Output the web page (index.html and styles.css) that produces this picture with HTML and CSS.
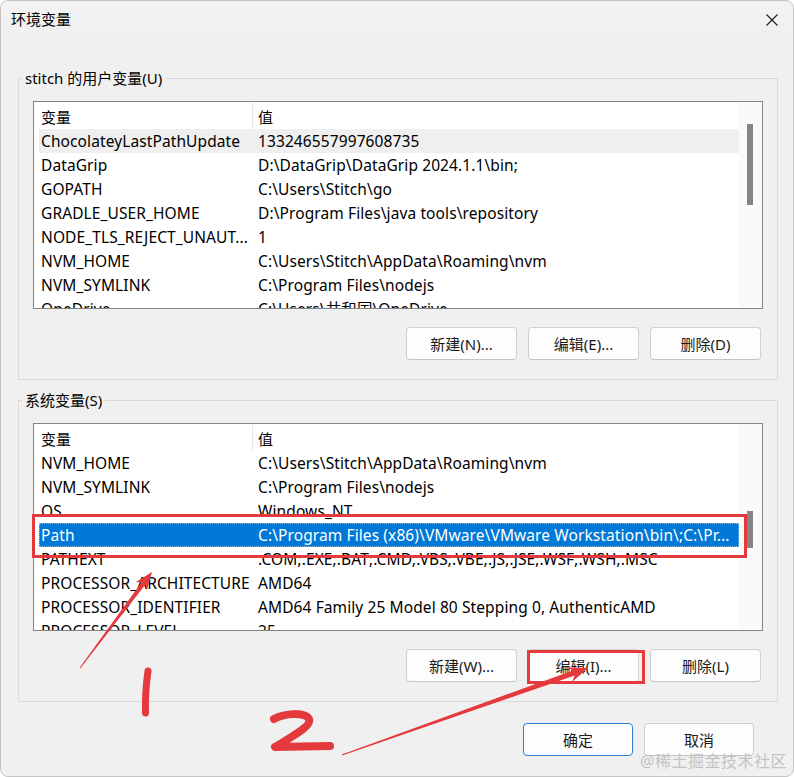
FILE: index.html
```html
<!DOCTYPE html>
<html lang="zh-CN">
<head>
<meta charset="utf-8">
<title>环境变量</title>
<link rel="stylesheet" href="styles.css">
</head>
<body>
<div class="window">
  <div class="titlebar">
    <span class="title">环境变量</span>
    <span class="close">
      <svg width="12" height="12" viewBox="0 0 12 12"><path d="M0.5 0.5 L11.5 11.5 M11.5 0.5 L0.5 11.5" stroke="#1b1b1b" stroke-width="1.1" fill="none"/></svg>
    </span>
  </div>
  <div class="content">
    <fieldset class="group">
      <legend>stitch 的用户变量(U)</legend>
      <div class="list">
        <div class="list-main">
          <div class="list-head"><div class="hcell hname">变量</div><div class="hcell hvalue">值</div></div>
          <div class="row hover"><span class="cell">ChocolateyLastPathUpdate</span><span class="cell">133246557997608735</span></div>
          <div class="row"><span class="cell">DataGrip</span><span class="cell">D:\DataGrip\DataGrip 2024.1.1\bin;</span></div>
          <div class="row"><span class="cell">GOPATH</span><span class="cell">C:\Users\Stitch\go</span></div>
          <div class="row"><span class="cell">GRADLE_USER_HOME</span><span class="cell">D:\Program Files\java tools\repository</span></div>
          <div class="row"><span class="cell">NODE_TLS_REJECT_UNAUT...</span><span class="cell">1</span></div>
          <div class="row"><span class="cell">NVM_HOME</span><span class="cell">C:\Users\Stitch\AppData\Roaming\nvm</span></div>
          <div class="row"><span class="cell">NVM_SYMLINK</span><span class="cell">C:\Program Files\nodejs</span></div>
          <div class="row"><span class="cell">OneDrive</span><span class="cell">C:\Users\共和国\OneDrive</span></div>
        </div>
        <div class="scrollbar"><div class="thumb thumb-user"></div></div>
      </div>
      <div class="btn-row">
        <button class="btn">新建(N)...</button>
        <button class="btn">编辑(E)...</button>
        <button class="btn">删除(D)</button>
      </div>
    </fieldset>

    <fieldset class="group group-sys">
      <legend>系统变量(S)</legend>
      <div class="list">
        <div class="list-main">
          <div class="list-head"><div class="hcell hname">变量</div><div class="hcell hvalue">值</div></div>
          <div class="row"><span class="cell">NVM_HOME</span><span class="cell">C:\Users\Stitch\AppData\Roaming\nvm</span></div>
          <div class="row"><span class="cell">NVM_SYMLINK</span><span class="cell">C:\Program Files\nodejs</span></div>
          <div class="row"><span class="cell">OS</span><span class="cell">Windows_NT</span></div>
          <div class="row selected"><span class="cell">Path</span><span class="cell">C:\Program Files (x86)\VMware\VMware Workstation\bin\;C:\Pr...</span></div>
          <div class="row"><span class="cell">PATHEXT</span><span class="cell">.COM;.EXE;.BAT;.CMD;.VBS;.VBE;.JS;.JSE;.WSF;.WSH;.MSC</span></div>
          <div class="row"><span class="cell">PROCESSOR_ARCHITECTURE</span><span class="cell">AMD64</span></div>
          <div class="row"><span class="cell">PROCESSOR_IDENTIFIER</span><span class="cell">AMD64 Family 25 Model 80 Stepping 0, AuthenticAMD</span></div>
          <div class="row"><span class="cell">PROCESSOR_LEVEL</span><span class="cell">25</span></div>
        </div>
        <div class="scrollbar"><div class="thumb thumb-sys"></div></div>
      </div>
      <div class="btn-row">
        <button class="btn">新建(W)...</button>
        <button class="btn">编辑(I)...</button>
        <button class="btn">删除(L)</button>
      </div>
    </fieldset>
  </div>
  <div class="footer">
    <button class="btn btn-default">确定</button>
    <button class="btn">取消</button>
  </div>
</div>

<svg class="annotations" width="794" height="777" viewBox="0 0 794 777">
  <rect x="33.5" y="515.5" width="712" height="41" fill="none" stroke="#e53a3d" stroke-width="3"/>
  <rect x="528.5" y="651.5" width="115" height="31" fill="none" stroke="#e53a3d" stroke-width="3"/>
  <polygon fill="#e53a3d" points="80.4,668.3 145.4,584.5 146.8,590.6 152,572 135.6,582.2 141.8,581.9 79.6,667.7"/>
  <polygon fill="#e53a3d" points="342.2,755.6 574.8,675.5 571.8,682.2 588,668 566.5,667.2 573.0,670.5 341.8,754.4"/>
  <path d="M148 671 C 147 680, 145 688, 145.5 713" fill="none" stroke="#e53a3d" stroke-width="7" stroke-linecap="round"/>
  <path d="M274 719 C 285 713, 305 712, 309 719 C 312 726, 290 738, 275 747 L 330 746" fill="none" stroke="#e53a3d" stroke-width="8" stroke-linecap="round" stroke-linejoin="round"/>
</svg>
<div class="watermark">@稀土掘金技术社区</div>
</body>
</html>
```

FILE: styles.css
```css
* { box-sizing: border-box; }

html, body {
  margin: 0;
  padding: 0;
  background: #ffffff;
}

body {
  font-family: "Noto Sans", "Noto Sans CJK SC", sans-serif;
  font-size: 15px;
  color: #000;
  width: 794px;
  height: 777px;
  overflow: hidden;
}

.window {
  width: 794px;
  height: 777px;
  border: 1px solid #c4c4c4;
  border-radius: 8px;
  background: #f0f0f0;
  display: flex;
  flex-direction: column;
}

.titlebar {
  height: 35px;
  display: flex;
  align-items: center;
  justify-content: space-between;
  padding: 0 15px 0 10px;
  background: linear-gradient(#f3f3f3, #f0f0f0);
  border-radius: 8px 8px 0 0;
}

.title {
  font-size: 15px;
  line-height: 20px;
  padding-top: 1px;
}

.close {
  display: flex;
  width: 12px;
  height: 12px;
  margin-top: 2px;
}

.content {
  padding: 33px 15px 0 17px;
}

.group {
  margin: 0;
  padding: 14px 14px 19px 14px;
  border: 1px solid #d9d9d9;
  min-width: 0;
}

.group-sys {
  margin-top: 11px;
}

.group legend {
  padding: 0 3px;
  margin-left: -11px;
  line-height: 18px;
  font-size: 15px;
}

.list {
  height: 208px;
  border: 1px solid #848484;
  background: #fff;
  display: flex;
  overflow: hidden;
  font-size: 15.5px;
  letter-spacing: 0.1px;
}

.list-main {
  flex: 1;
  min-width: 0;
  overflow: hidden;
}

.list-head {
  height: 27px;
  display: flex;
}

.hcell {
  white-space: nowrap;
  font-size: 15px;
  letter-spacing: 0;
}

.hname {
  width: 219px;
  height: 26px;
  padding-left: 7px;
  padding-top: 3px;
  border-right: 1px solid #e6e6e6;
  margin-top: 1px;
  line-height: 22px;
}

.hvalue {
  padding-left: 5px;
  padding-top: 4px;
  line-height: 22px;
}

.row {
  height: 24px;
  margin-left: 5px;
  display: grid;
  grid-template-columns: 217px 1fr;
  line-height: 24px;
}

.row.hover {
  background: #efefef;
}

.row.selected {
  background: #0078d7;
  color: #fff;
  outline: 1px dotted #8fc1ee;
  outline-offset: -1px;
}

.cell {
  padding: 0 2px;
  white-space: nowrap;
  overflow: hidden;
}

.scrollbar {
  width: 23px;
  flex: none;
  background: #fafafa;
}

.thumb {
  width: 6px;
  margin-left: 8px;
  background: #858585;
}

.thumb-user {
  margin-top: 22px;
  height: 81px;
}

.thumb-sys {
  margin-top: 87px;
  height: 37px;
}

.btn-row {
  display: flex;
  justify-content: flex-end;
  gap: 11px;
  margin-top: 18px;
  padding-right: 2px;
}

.btn {
  width: 111px;
  height: 33px;
  border: 1px solid #d0d0d0;
  border-bottom-color: #c4c4c4;
  border-radius: 4px;
  background: #fdfdfd;
  font-family: "Noto Sans", "Noto Sans CJK SC", sans-serif;
  font-size: 15px;
  color: #1a1a1a;
  padding: 0;
}

.footer {
  display: flex;
  justify-content: flex-end;
  gap: 11px;
  margin-top: 21px;
  padding-right: 39px;
}

.footer .btn {
  width: 110px;
}

.btn-default {
  border-color: #2a7fd0;
}

.annotations {
  position: absolute;
  left: 0;
  top: 0;
  pointer-events: none;
}

.watermark {
  position: absolute;
  left: 640px;
  top: 750px;
  font-size: 16px;
  line-height: 22px;
  color: #c3c3c3;
  letter-spacing: 0.5px;
  pointer-events: none;
}
```
